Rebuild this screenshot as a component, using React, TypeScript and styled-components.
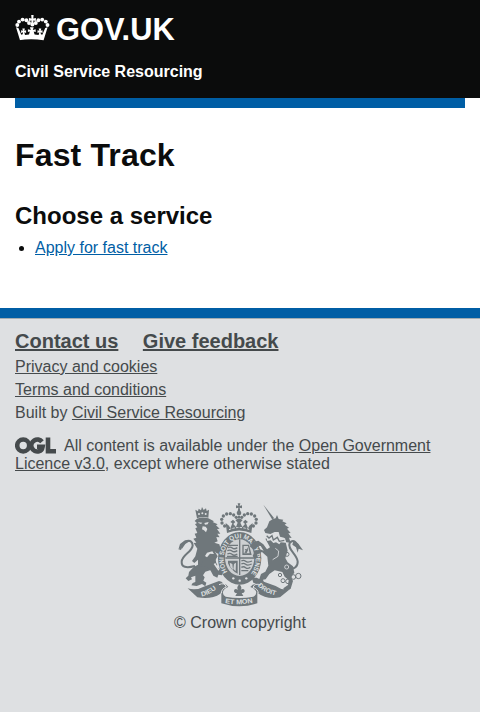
import React from "react";
import styled, { createGlobalStyle } from "styled-components";

const GlobalStyle = createGlobalStyle`
  * { box-sizing: border-box; }
  html { background: #dee0e2; }
  body { margin: 0; background: #dee0e2; color: #0b0c0c; font: 16px/20px "Liberation Sans", Arial, sans-serif; }
  #root { background: #fff; }
`;

const Header = styled.header`
  height: 98px;
  padding: 11px 15px 0;
  background: #0b0c0c;
  color: #fff;
`;
const Brand = styled.div`
  display: flex;
  height: 34px;
  gap: 6px;
  font-size: 30.8px;
  font-weight: bold;
  line-height: 37px;
`;
const CrownIcon = styled.svg`
  width: 35px;
  height: 27px;
  margin-top: 4px;
`;
const ProductName = styled.div`
  margin-top: 17px;
  font-weight: bold;
`;
const Bar = styled.div`
  height: 10px;
  margin: 0 15px;
  background: #005ea5;
`;
const Main = styled.main`
  height: 200px;
  padding: 30px 15px 0;
`;
const Title = styled.h1`
  margin: 0;
  font-size: 32px;
  line-height: 35px;
  letter-spacing: 0.15px;
`;
const Subtitle = styled.h2`
  margin: 30px 0 0;
  font-size: 24px;
  line-height: 25px;
`;
const Services = styled.ul`
  margin: 10px 0 0;
  padding: 0 0 0 20px;
`;
const Link = styled.a<{ $blue?: boolean }>`
  color: ${(p) => (p.$blue ? "#005ea5" : "inherit")};
  text-decoration: underline;
`;
const Footer = styled.footer`
  border-top: 10px solid #005ea5;
  background: #dee0e2;
  color: #454a4c;
`;
const FooterInner = styled.div`
  height: 394px;
  padding: 9px 15px 0;
  border-top: 1px solid #a1acb2;
`;
const Primary = styled.div`
  display: flex;
  gap: 24.5px;
  font-size: 20px;
  font-weight: bold;
  line-height: 26px;
`;
const FooterLine = styled.div`
  height: 23px;
  line-height: 25px;
`;
const Licence = styled.p`
  margin: 14px 0 0;
  line-height: 18px;
`;
const OglIcon = styled.svg`
  width: 41px;
  height: 17px;
  margin-right: 8px;
  vertical-align: -3px;
`;
const Copyright = styled.div`
  display: flex;
  flex-direction: column;
  align-items: center;
  margin-top: 22px;
`;
const ArmsSvg = styled.svg`
  width: 140px;
  height: 112px;
  margin-bottom: 6px;
  overflow: visible;
`;
const Motto = styled.text<{ $size?: number }>`
  fill: #dee0e2;
  font: bold ${(p) => p.$size ?? 20}px "Liberation Sans", Arial, sans-serif;
`;

const crownBeads = [[2.3, 10], [4, 6.6], [7.6, 4.6], [11.4, 5.2], [14, 8]];

const Crown = () => (
  <CrownIcon viewBox="0 0 35 27" fill="#fff">
    {crownBeads.map(([x, y]) => (
      <React.Fragment key={x}>
        <circle cx={x} cy={y} r="1.95" />
        <circle cx={34.8 - x} cy={y} r="1.95" />
      </React.Fragment>
    ))}
    <path d="M16.2 0h2.4l-.3 3.5 2.6-.5v3l-2.6-.5.4 3.5h-2.6l.4-3.5-2.6.5V3l2.6.5Z" />
    <circle cx="17.4" cy="9.6" r="2" />
    <path d="M5 25.2 1 12.3l2.4.7 2.9 6.7 1.4-.4.3-2.1-1.9.7v-2.6l1.8.5-.6-2.3h2.6l-.6 2.3 1.8-.5v2.6l-1.8-.7.7 2.7 4-.5.9-3-2 .7v-2.9l2.9.8-.9-2.8h3.8l-.9 2.8 2.9-.8v2.9l-2-.7.9 3 4 .5.7-2.7-1.8.7v-2.6l1.8.5-.6-2.3h2.6l-.6 2.3 1.8-.5v2.6l-1.9-.7.3 2.1 1.4.4 2.9-6.7 2.4-.7-4 12.9q-12.4-1.8-24.8 0Z" />
  </CrownIcon>
);

const Ogl = () => (
  <OglIcon viewBox="0 0 41 17" fill="none" stroke="#454a4c" strokeWidth="4.6">
    <circle cx="8.2" cy="8.5" r="6" />
    <path d="M27 4.8A6 6 0 1 0 24 14.3Q27 13.7 27.6 9.7H22M33 .5V14.2H41" />
  </OglIcon>
);

const archBeads = [[164, 93], [156, 84], [155, 73], [160, 63], [170, 57], [181, 56], [191, 60], [199, 67]];

const Arms = () => (
  <ArmsSvg viewBox="0 0 420 336" fill="#6f777b" stroke="none">
    <defs>
      <path id="garter" d="M172 231A48 62 0 1 1 246 231" />
      <path id="dieu" d="M95 304Q124 299 148 273" />
      <path id="etmon" d="M165 324Q208 332 252 322" />
      <path id="droit" d="M263 272Q287 299 331 303" />
    </defs>

    {/* lion */}
    <path d="m81 70-5-26 8 5 2-8 7 5 3-10 5 9 7-5 2 8 7-4-2 24Q98 63 81 70Z" />
    <g fill="#dee0e2"><circle cx="87" cy="57" r="3" /><circle cx="97" cy="55" r="3" /><circle cx="107" cy="57" r="3" /></g>
    <path d="M81 71Q98 64 115 70L132 79 128 81 143 88 138 91 149 101 141 102 151 116 142 116 149 127 139 126 143 139 133 143 148 148 151 159 164 164 151 169 154 178 140 175 134 169 143 184 134 199 142 209 139 220 151 229 147 237 136 229 126 220 120 226 106 230 99 241 104 247 100 257 109 263 106 274 96 267 80 273 64 271 68 264 76 261 76 242 63 247 66 253 55 258 47 250 55 242 57 231 71 216 84 209 84 194 73 204 66 198 76 184 82 161 71 144 79 143 70 131 79 128 74 116 82 114 76 100 82 97 75 88 81 84 74 78Z" />
    <path d="m116 167 20 22 5 27 18 15-3 10-11-2-3 9-12-6-8-15-14-14-19 3Z" />
    <path d="M75 213Q34 224 35 200C36 179 67 171 68 151Q67 135 51 138Q35 145 30 164" fill="none" stroke="#6f777b" strokeWidth="6" />
    <path d="m25 164 5-17 15-11 16 1-15 10-11 16-1-8Z" />
    <g fill="#dee0e2"><path d="m85 82 12 1-4 4-8-3Zm18 2 13-3-3 7-8 1Zm-5 10 9 1 5 7-4 10-6-6-6-3Z" /><path d="m111 173 16-4 5 8-12-1-9 11-6-4Zm25 31 12 20-3 3-14-20Z" /></g>

    {/* royal crown */}
    <path d="M203 25h8l-2 8 7-2v9l-7-2 2 11h-8l2-11-7 2v-9l7 2Z" />
    <circle cx="207" cy="54" r="7" />
    <path d="m171 114-4-30 10 8 4 8 6-15-6-4 8-7 7 7-6 6 8 9 5-13-7-8 11-5 11 5-7 8 6 13 8-9-6-6 7-7 8 7-6 4 6 15 4-8 10-8-4 30Q208 99 171 114Z" />
    <path d="M207 55V84" stroke="#6f777b" strokeWidth="6" strokeDasharray="6 2" />
    {archBeads.map(([x, y]) => (
      <React.Fragment key={y}>
        <circle cx={x} cy={y} r="5" />
        <circle cx={414 - x} cy={y} r="5" />
      </React.Fragment>
    ))}
    <path d="M177 104Q208 91 239 104" fill="none" stroke="#dee0e2" strokeWidth="3" strokeDasharray="7 4" />

    {/* garter and quartered shield */}
    <ellipse cx="209" cy="190" rx="65" ry="79" />
    <ellipse cx="209" cy="188" rx="44" ry="55" fill="#cdd0d2" />
    <path d="M209 133V240M166 189H252" fill="none" stroke="#6f777b" strokeWidth="4" />
    <path d="M176 151H204M174 158q7-4 13 1t15-1M172 167q8-4 14 1t16-1M172 177q8-4 14 1t16-1M171 184H203M214 198q7-4 13 1t19-1M214 207q7-4 13 1t18-1M214 217q7-4 13 1t14-1M214 227h21" fill="none" stroke="#6f777b" strokeWidth="4" />
    <path d="M217 149h20l8 31h-28Zm4 4v22h18l-5-22Z" fillRule="evenodd" />
    <path d="m223 173 4-6-3-5 6 1 3-6 1 9-4 8Z" />
    <path d="M174 197h29v39q-20-9-29-31Zm5 6 8 4 2 18-8-9Zm13 4 6-4-1 26-7-7Z" fillRule="evenodd" />
    <Motto><textPath href="#garter" textLength="262" lengthAdjust="spacingAndGlyphs">HONI SOIT QUI MAL Y PENSE</textPath></Motto>
    <g fill="#dee0e2"><circle cx="190" cy="250" r="3.5" /><circle cx="209" cy="257" r="3.5" /><circle cx="229" cy="250" r="3.5" /></g>

    {/* unicorn */}
    <path d="m280 29 32 40-5 5Z" />
    <path d="m309 72 8-2 4-10 5 12 14 2-3 5 13 6-6 4 13 9-6 3 11 13-7 1 10 14-8-1 5 15-13-1-7-14-12-3-4-14-12 0-13 6-15-3-4-9 9-8 7-18Z" />
    <path d="m286 131 20-6 19 14 22 3 6 25-7 22 7 13 16 12 4 19-10 13 6 12-7 23-19 7-3-8 14-10 2-15-12-10-7-14-23-5-16 11-11 16-8 1 3 9-14 7-18-7-5-15 15 0 8 4 5-15 13-7 9-18-3-27-16-14-14 7 1 10-9 4-6-9 5-12 17-8 11 4-9-14-12-1-12 10-9-8 10-13 16-4 15 11 11 15 9-6Z" />
    <path d="m286 118 12 7 9-7 7 12 11-8 8 12 12-5 3 14-16-1-4 6-10-6-8 2-8-8-10 2Z" fill="#dee0e2" />
    <path d="m290 122 7 7 9-7 4 13 12-8 6 12 15-3" fill="none" stroke="#6f777b" strokeWidth="4" />
    <path d="M352 223Q385 222 383 199C380 177 351 162 359 144Q372 128 385 154" fill="none" stroke="#6f777b" strokeWidth="6" />
    <path d="m370 138 15 8 14 20-13-5-3 12-5-16-11-8Z" />
    <g fill="none" stroke="#dee0e2" strokeWidth="2.5"><path d="m316 160 10 8-2 16-16 10" /><circle cx="350" cy="216" r="6" /></g>
    <g fill="none" stroke="#6f777b" strokeWidth="3"><circle cx="330" cy="240" r="5" /><circle cx="339" cy="257" r="6" /><circle cx="354" cy="259" r="7" /><circle cx="370" cy="246" r="7" /><circle cx="385" cy="243" r="8" /><circle cx="351" cy="178" r="6" /></g>

    {/* motto scroll */}
    <path d="M53 280Q78 288 101 275L147 258Q165 261 159 278L151 296Q125 314 82 307Z" />
    <path d="m363 280q-22 10-46-7l-48-17q-15 4-13 20l7 18q26 20 67 13Z" />
    <path d="M145 273q20-14 30 3-12 3-16 14-2 10 8 15 42 8 83 0 11-5 8-16-5-10-17-13 12-17 31-2-4 8-10 13v38q-54 18-108 0v-36Z" />
    <path d="M174 279q-12 6-12 15 2 8 14 10 32 5 64 0 13-2 14-10 0-9-12-15-33 10-68 0Z" fill="#dee0e2" />
    <path d="M147 269q17-8 22 7-15 5-15 19m119-25q-19-7-24 7 15 5 16 18" fill="none" stroke="#dee0e2" strokeWidth="3" />
    <path d="M208 268q10 10 4 16 11-5 12 3 0 7-9 7l5 9h-24l5-9q-9 0-9-7 1-8 12-3-6-6 4-16Z" />
    <Motto><textPath href="#dieu" textLength="50" lengthAdjust="spacingAndGlyphs">DIEU</textPath></Motto>
    <Motto><textPath href="#etmon" textLength="84" lengthAdjust="spacingAndGlyphs">ET MON</textPath></Motto>
    <Motto><textPath href="#droit" textLength="62" lengthAdjust="spacingAndGlyphs">DROIT</textPath></Motto>
  </ArmsSvg>
);

export default function App() {
  return (
    <>
      <GlobalStyle />
      <Header>
        <Brand><Crown />GOV.UK</Brand>
        <ProductName>Civil Service Resourcing</ProductName>
      </Header>
      <Bar />
      <Main>
        <Title>Fast Track</Title>
        <Subtitle>Choose a service</Subtitle>
        <Services><li><Link $blue>Apply for fast track</Link></li></Services>
      </Main>
      <Footer>
        <FooterInner>
          <Primary><Link>Contact us</Link><Link>Give feedback</Link></Primary>
          <FooterLine><Link>Privacy and cookies</Link></FooterLine>
          <FooterLine><Link>Terms and conditions</Link></FooterLine>
          <FooterLine>Built by <Link>Civil Service Resourcing</Link></FooterLine>
          <Licence><Ogl />All content is available under the <Link>Open Government Licence v3.0</Link>, except where otherwise stated</Licence>
          <Copyright><Arms />© Crown copyright</Copyright>
        </FooterInner>
      </Footer>
    </>
  );
}
